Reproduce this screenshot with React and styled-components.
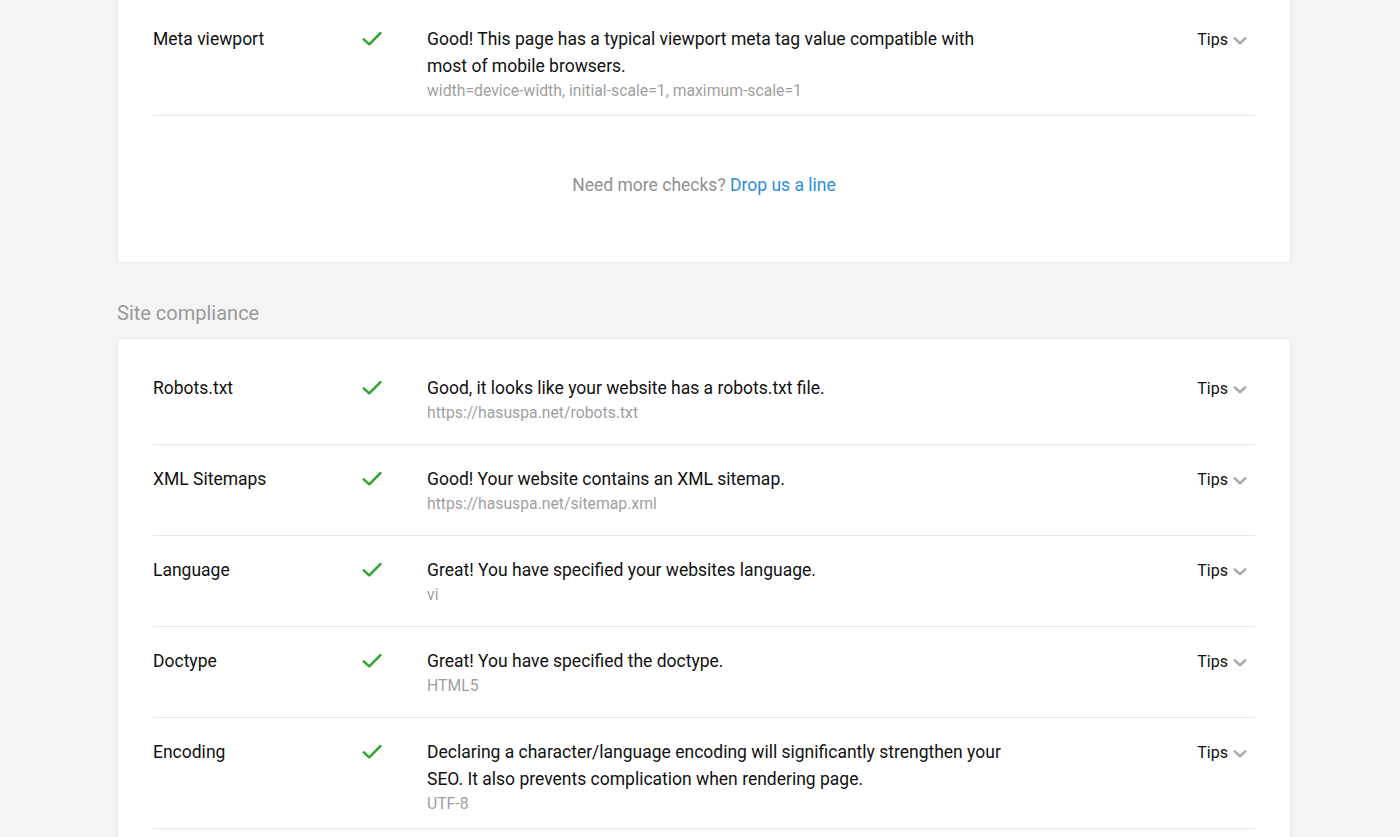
import React from 'react';
import styled, { createGlobalStyle } from 'styled-components';

const GlobalStyle = createGlobalStyle`
  html, body {
    margin: 0;
    padding: 0;
    background: #f4f4f4;
    font-family: Roboto, "Liberation Sans", Arial, sans-serif;
    color: #111;
  }
  * { box-sizing: border-box; }
`;

const Page = styled.div`
  width: 1174px;
  margin: -11px 0 0 117px;
  padding-bottom: 40px;
`;

const Card = styled.section`
  background: #fff;
  border: 1px solid #ebebeb;
  border-radius: 3px;
  padding: 15px 35px ${(p) => p.$bottom || 0}px 35px;
`;

const SectionTitle = styled.h2`
  margin: 37px 0 12px;
  font-size: 20px;
  font-weight: 400;
  line-height: 26px;
  color: #9a9a9a;
`;

const Row = styled.div`
  display: grid;
  grid-template-columns: 209px 65px 580px 1fr;
  align-items: start;
  min-height: 91px;
  padding: 21px 0 13px;
  border-bottom: 1px solid #e9e9e9;
`;

const Label = styled.div`
  font-size: 17.5px;
  line-height: 27px;
  color: #111;
`;

const CheckCell = styled.div`
  padding-top: 5px;
  line-height: 0;
`;

const Desc = styled.div`
  font-size: 17.5px;
  line-height: 27px;
  color: #111;
`;

const Sub = styled.div`
  font-size: 15.75px;
  line-height: 22px;
  color: #9f9f9f;
`;

const Tips = styled.button`
  justify-self: end;
  margin-right: 8px;
  display: flex;
  align-items: center;
  gap: 5px;
  padding: 0;
  border: none;
  background: none;
  font-family: inherit;
  font-size: 16px;
  line-height: 27px;
  color: #111;
  cursor: pointer;
`;

const Footer = styled.div`
  padding: 57px 0 65px;
  text-align: center;
  font-size: 17.5px;
  line-height: 24px;
  color: #909090;
`;

const Link = styled.a`
  color: #2b8fe0;
  text-decoration: none;
`;

const CheckIcon = () => (
  <svg width="20" height="16" viewBox="0 0 20 16">
    <path d="M1.8 8.4 L7.2 13.4 L18.4 2.2" fill="none" stroke="#31a631" strokeWidth="2.6" strokeLinecap="round" strokeLinejoin="round" />
  </svg>
);

const Chevron = () => (
  <svg width="14" height="10" viewBox="0 0 14 10" style={{ marginTop: 3 }}>
    <path d="M1.8 2.4 L7 7.2 L12.2 2.4" fill="none" stroke="#ababab" strokeWidth="2.6" strokeLinecap="round" strokeLinejoin="round" />
  </svg>
);

const CheckRow = ({ label, lines, sub }) => (
  <Row>
    <Label>{label}</Label>
    <CheckCell><CheckIcon /></CheckCell>
    <div>
      <Desc>{lines}</Desc>
      <Sub>{sub}</Sub>
    </div>
    <Tips>Tips <Chevron /></Tips>
  </Row>
);

const compliance = [
  { label: 'Robots.txt', lines: 'Good, it looks like your website has a robots.txt file.', sub: 'https://hasuspa.net/robots.txt' },
  { label: 'XML Sitemaps', lines: 'Good! Your website contains an XML sitemap.', sub: 'https://hasuspa.net/sitemap.xml' },
  { label: 'Language', lines: 'Great! You have specified your websites language.', sub: 'vi' },
  { label: 'Doctype', lines: 'Great! You have specified the doctype.', sub: 'HTML5' },
  {
    label: 'Encoding',
    lines: 'Declaring a character/language encoding will significantly strengthen your SEO. It also prevents complication when rendering page.',
    sub: 'UTF-8',
  },
];

export default function App() {
  return (
    <>
      <GlobalStyle />
      <Page>
        <Card>
          <CheckRow
            label="Meta viewport"
            lines="Good! This page has a typical viewport meta tag value compatible with most of mobile browsers."
            sub="width=device-width, initial-scale=1, maximum-scale=1"
          />
          <Footer>
            Need more checks? <Link href="#">Drop us a line</Link>
          </Footer>
        </Card>

        <SectionTitle>Site compliance</SectionTitle>
        <Card $bottom={36}>
          {compliance.map((c) => (
            <CheckRow key={c.label} {...c} />
          ))}
        </Card>
      </Page>
    </>
  );
}
